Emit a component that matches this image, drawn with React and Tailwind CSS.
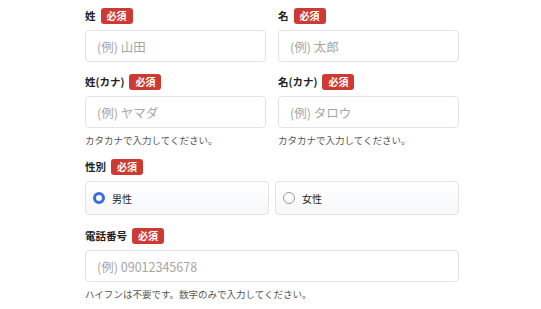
import React, { useState } from 'react';

const font = { fontFamily: '"Noto Sans CJK JP", "Noto Sans", sans-serif' };

const Badge = () => (
    <span className="inline-flex items-center h-4 px-[6px] rounded-[3px] bg-[#cc3a32] text-white text-[10px] font-bold leading-none">
        必須
    </span>
);

const Label = ({ children }) => (
    <div className="flex items-center gap-[5px] h-4">
        <span className="text-[10.5px] font-bold text-[#222] leading-none">{children}</span>
        <Badge />
    </div>
);

const Input = ({ placeholder }) => (
    <input
        type="text"
        placeholder={placeholder}
        className="mt-[6px] w-full h-[32px] px-[11px] rounded-[4px] border border-[#e2e2e2] bg-white text-[12.5px] text-[#333] placeholder:text-[#a6a6a6] outline-none"
    />
);

const Help = ({ children }) => (
    <p className="mt-[6px] text-[9.5px] leading-[12px] text-[#555]">{children}</p>
);

const Radio = ({ checked, label, onClick }) => (
    <button
        type="button"
        onClick={onClick}
        className="flex items-center gap-[7px] h-[34px] px-[7px] rounded-[4px] border border-[#e4e4e4] bg-gradient-to-b from-white to-[#f6f7f9] text-left"
    >
        {checked ? (
            <span className="w-[12px] h-[12px] rounded-full border-[3.5px] border-[#3a6be0] bg-white" />
        ) : (
            <span className="w-[12px] h-[12px] rounded-full border border-[#999] bg-white" />
        )}
        <span className="text-[10px] text-[#222]">{label}</span>
    </button>
);

export default function App() {
    const [gender, setGender] = useState('male');

    return (
        <div className="w-[541px] h-[309px] bg-white overflow-hidden" style={font}>
            <div className="w-[374px] ml-[85px] pt-[8px]">
                {/* 氏名 */}
                <div className="grid grid-cols-2 gap-x-[12px]">
                    <div>
                        <Label>姓</Label>
                        <Input placeholder="(例) 山田" />
                    </div>
                    <div>
                        <Label>名</Label>
                        <Input placeholder="(例) 太郎" />
                    </div>
                </div>

                {/* フリガナ */}
                <div className="grid grid-cols-2 gap-x-[12px] mt-[12px]">
                    <div>
                        <Label>姓(カナ)</Label>
                        <Input placeholder="(例) ヤマダ" />
                        <Help>カタカナで入力してください。</Help>
                    </div>
                    <div>
                        <Label>名(カナ)</Label>
                        <Input placeholder="(例) タロウ" />
                        <Help>カタカナで入力してください。</Help>
                    </div>
                </div>

                {/* 性別 */}
                <div className="mt-[13px]">
                    <Label>性別</Label>
                    <div className="grid grid-cols-2 gap-x-[6px] mt-[6px]">
                        <Radio checked={gender === 'male'} label="男性" onClick={() => setGender('male')} />
                        <Radio checked={gender === 'female'} label="女性" onClick={() => setGender('female')} />
                    </div>
                </div>

                {/* 電話番号 */}
                <div className="mt-[13px]">
                    <Label>電話番号</Label>
                    <Input placeholder="(例) 09012345678" />
                    <Help>ハイフンは不要です。数字のみで入力してください。</Help>
                </div>
            </div>
        </div>
    );
}
